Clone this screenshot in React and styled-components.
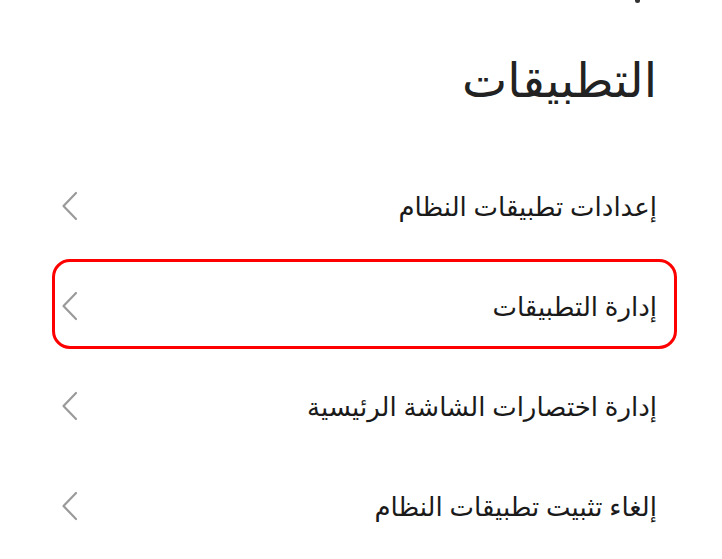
import React from "react";
import styled, { createGlobalStyle } from "styled-components";

const GlobalStyle = createGlobalStyle`
  html, body {
    margin: 0;
    padding: 0;
    background: #ffffff;
  }
  body {
    font-family: "Noto Sans", "DejaVu Sans", sans-serif;
    color: #1a1a1a;
  }
`;

const Page = styled.div`
  direction: rtl;
  width: 722px;
  height: 559px;
  overflow: hidden;
  box-sizing: border-box;
  padding: 0 45px 0 52px;
`;

const TopMark = styled.div`
  height: 4px;
  display: flex;
  padding-right: 37px;
  span {
    width: 5px;
    height: 3px;
    border-radius: 0 0 3px 3px;
    background: #333;
  }
`;

const Title = styled.h1`
  margin: 0;
  padding: 42px 20px 0 0;
  height: 112px;
  box-sizing: border-box;
  font-size: 48px;
  font-weight: 400;
  line-height: 66px;
  color: #222;
`;

const List = styled.div`
  display: flex;
  flex-direction: column;
  margin-top: 40px;
`;

const Row = styled.div`
  position: relative;
  height: 100px;
  box-sizing: border-box;
  display: flex;
  align-items: center;
  justify-content: space-between;
  padding: 0 20px 0 9px;

  &::after {
    content: "";
    display: ${(p) => (p.$active ? "block" : "none")};
    position: absolute;
    top: 3px;
    bottom: 7px;
    left: 0;
    right: 0;
    border: 3px solid #ff0000;
    border-radius: 18px;
    pointer-events: none;
  }
`;

const Label = styled.span`
  font-size: 26px;
  line-height: 40px;
  color: #1a1a1a;
`;

const Chevron = styled.svg`
  width: 18px;
  height: 30px;
  flex-shrink: 0;
`;

const items = [
  "إعدادات تطبيقات النظام",
  "إدارة التطبيقات",
  "إدارة اختصارات الشاشة الرئيسية",
  "إلغاء تثبيت تطبيقات النظام",
];

export default function App() {
  return (
    <>
      <GlobalStyle />
      <Page>
        <TopMark>
          <span />
        </TopMark>
        <Title>التطبيقات</Title>
        <List>
          {items.map((text, i) => (
            <Row key={text} $active={i === 1}>
              <Label>{text}</Label>
              <Chevron viewBox="0 0 18 30">
                <path
                  d="M15 2 L2.5 15 L15 28"
                  fill="none"
                  stroke="#9a9a9a"
                  strokeWidth="2.2"
                  strokeLinecap="round"
                  strokeLinejoin="round"
                />
              </Chevron>
            </Row>
          ))}
        </List>
      </Page>
    </>
  );
}
